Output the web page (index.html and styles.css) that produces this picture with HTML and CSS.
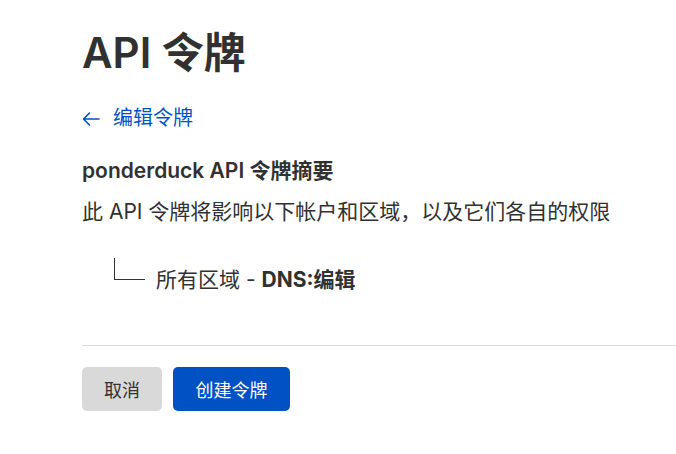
FILE: index.html
```html
<!DOCTYPE html>
<html lang="zh-CN">
<head>
<meta charset="utf-8">
<title>API 令牌</title>
<link rel="stylesheet" href="styles.css">
</head>
<body>
<main class="page">
  <h1 class="title">API 令牌</h1>
  <a class="back" href="#"><svg class="arrow" width="18" height="14" viewBox="0 0 18 14" aria-hidden="true"><path d="M17 7H1.5M7.5 1L1.5 7l6 6" fill="none" stroke="currentColor" stroke-width="1.6" stroke-linecap="round" stroke-linejoin="round"/></svg><span>编辑令牌</span></a>
  <h2 class="summary-title">ponderduck API 令牌摘要</h2>
  <p class="summary-desc">此 API 令牌将影响以下帐户和区域，以及它们各自的权限</p>
  <div class="tree">
    <span class="tree-line"></span>
    <span class="tree-text">所有区域 - <strong>DNS:编辑</strong></span>
  </div>
  <hr class="divider">
  <div class="actions">
    <button class="btn btn-cancel" type="button">取消</button>
    <button class="btn btn-primary" type="button">创建令牌</button>
  </div>
</main>
</body>
</html>
```

FILE: styles.css
```css
html, body {
  margin: 0;
  padding: 0;
  background: #ffffff;
}

body {
  font-family: Inter, "Noto Sans CJK SC", sans-serif;
  color: #313131;
}

.page {
  padding: 23px 0 0 82px;
  display: flex;
  flex-direction: column;
  align-items: flex-start;
}

.title {
  margin: 0;
  font-size: 42px;
  font-weight: 600;
  line-height: 60px;
  color: #313131;
}

.back {
  margin-top: 21px;
  display: flex;
  align-items: center;
  gap: 13px;
  font-size: 20px;
  line-height: 28px;
  color: #0051c3;
  text-decoration: none;
}

.arrow {
  display: block;
  margin-top: 1px;
}

.summary-title {
  margin: 25px 0 0;
  font-size: 21px;
  font-weight: 600;
  line-height: 28px;
}

.summary-desc {
  margin: 12px 0 0;
  font-size: 21px;
  line-height: 30px;
}

.tree {
  margin: 31px 0 0 32px;
  display: flex;
  align-items: flex-start;
}

.tree-line {
  width: 31px;
  height: 22px;
  border-left: 1px solid #313131;
  border-bottom: 1px solid #313131;
  box-sizing: border-box;
}

.tree-text {
  margin: 8px 0 0 11px;
  font-size: 21px;
  line-height: 28px;
}

.tree-text strong {
  font-weight: 700;
}

.divider {
  align-self: stretch;
  margin: 51px 0 0;
  border: 0;
  border-top: 1px solid #d9d9d9;
  height: 0;
}

.actions {
  margin-top: 21px;
  display: flex;
  gap: 11px;
}

.btn {
  font-family: Inter, "Noto Sans CJK SC", sans-serif;
  font-size: 18px;
  height: 44px;
  border: 0;
  border-radius: 5px;
  padding: 0;
  cursor: pointer;
}

.btn-cancel {
  width: 80px;
  background: #d9d9d9;
  color: #313131;
}

.btn-primary {
  width: 117px;
  background: #0051c3;
  color: #ffffff;
}
```
